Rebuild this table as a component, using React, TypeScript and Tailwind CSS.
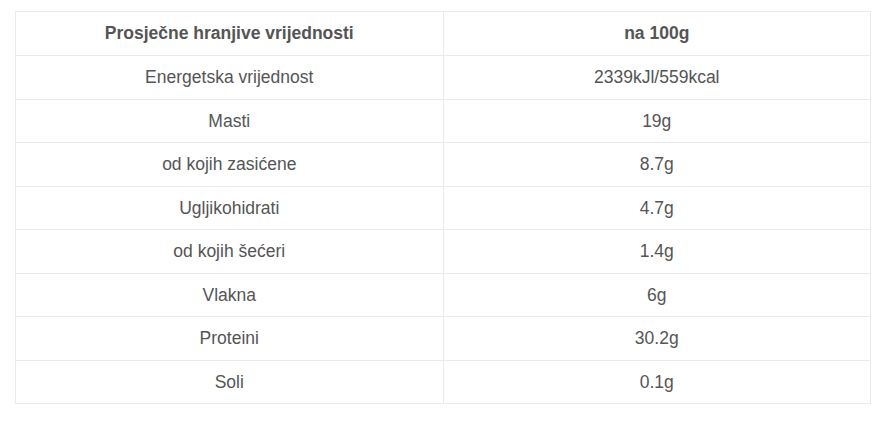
import React from "react";

const rows: [string, string][] = [
  ["Energetska vrijednost", "2339kJl/559kcal"],
  ["Masti", "19g"],
  ["od kojih zasićene", "8.7g"],
  ["Ugljikohidrati", "4.7g"],
  ["od kojih šećeri", "1.4g"],
  ["Vlakna", "6g"],
  ["Proteini", "30.2g"],
  ["Soli", "0.1g"],
];

export default function App() {
  return (
    <div className="w-[880px] h-[426px] bg-white pt-[11px] pl-[15px] font-['Liberation_Sans',Arial,sans-serif] text-[17.5px] text-[#555]">
      <table className="w-[856px] border-collapse table-fixed">
        <thead>
          <tr className="h-[44px]">
            <th className="border border-[#ebebeb] font-bold text-center align-middle">Prosječne hranjive vrijednosti</th>
            <th className="border border-[#ebebeb] font-bold text-center align-middle">na 100g</th>
          </tr>
        </thead>
        <tbody>
          {rows.map(([name, value]) => (
            <tr key={name} className="h-[43.5px]">
              <td className="border border-[#ebebeb] text-center align-middle">{name}</td>
              <td className="border border-[#ebebeb] text-center align-middle">{value}</td>
            </tr>
          ))}
        </tbody>
      </table>
    </div>
  );
}
